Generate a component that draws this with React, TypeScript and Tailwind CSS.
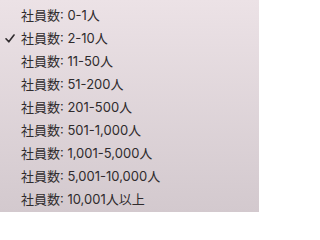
import React from "react";

const items = [
  "社員数: 0-1人",
  "社員数: 2-10人",
  "社員数: 11-50人",
  "社員数: 51-200人",
  "社員数: 201-500人",
  "社員数: 501-1,000人",
  "社員数: 1,001-5,000人",
  "社員数: 5,001-10,000人",
  "社員数: 10,001人以上",
];

export default function App() {
  return (
    <div
      className="w-[259px] h-[212px] overflow-hidden bg-gradient-to-b from-[#ece2e6] to-[#d3c9ce] pt-[4px] text-[13px] text-[#2f2b2d]"
      style={{ fontFamily: 'Inter, "Noto Sans CJK JP", sans-serif' }}
    >
      {items.map((t, i) => (
        <div key={t} className="flex items-center h-[23px]">
          <div className="w-[21px] flex justify-end pr-[6px]">
            {i === 1 && (
              <svg width="10" height="9" viewBox="0 0 10 9" fill="none">
                <path d="M1 4.8 L3.8 7.8 L9 1" stroke="#2f2b2d" strokeWidth="1.6" strokeLinecap="round" strokeLinejoin="round" />
              </svg>
            )}
          </div>
          <span className="leading-none">{t}</span>
        </div>
      ))}
    </div>
  );
}
